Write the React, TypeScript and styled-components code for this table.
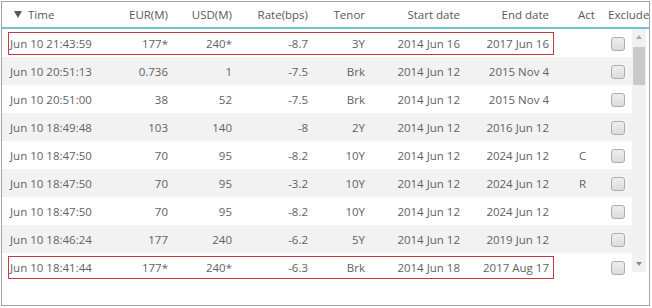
import React from "react";
import styled, { createGlobalStyle } from "styled-components";

const Global = createGlobalStyle`
  html, body { margin: 0; padding: 0; background: #ffffff; }
  body { font-family: "Open Sans", "Liberation Sans", sans-serif; }
`;

const COLS = "109px 54px 64px 76px 57px 95px 89px";

const Frame = styled.div`
  box-sizing: border-box;
  margin: 1px 0 0 1px;
  width: 649px;
  height: 305px;
  border: 1px solid #a3a3a3;
  background: #ffffff;
  color: #626262;
  font-size: 11.5px;
  overflow: hidden;
  display: flex;
  flex-direction: column;
`;

const HeaderRow = styled.div`
  box-sizing: border-box;
  display: flex;
  align-items: flex-start;
  height: 27px;
  padding-top: 1px;
  border-bottom: 2px solid #6ec4d0;
  color: #585858;
  white-space: nowrap;
`;

const Main = styled.div<{ $hl?: boolean }>`
  box-sizing: border-box;
  margin-left: 6px;
  width: 546px;
  height: 23px;
  display: grid;
  grid-template-columns: ${COLS};
  align-items: center;
  border: 1px solid ${(p) => (p.$hl ? "#c23a44" : "transparent")};
`;

const Cell = styled.div<{ $left?: boolean }>`
  text-align: ${(p) => (p.$left ? "left" : "right")};
  padding: ${(p) => (p.$left ? "0 0 0 1px" : "0 4px 0 0")};
  white-space: nowrap;
`;

const SortCell = styled.div`
  display: flex;
  align-items: center;
  gap: 6px;
  padding-left: 5px;
`;

const SortArrow = styled.span`
  width: 0;
  height: 0;
  border-left: 4px solid transparent;
  border-right: 4px solid transparent;
  border-top: 7px solid #5a5a5a;
`;

const ActCell = styled.div`
  box-sizing: border-box;
  width: 46px;
  height: 23px;
  padding-left: 25px;
  display: flex;
  align-items: center;
  white-space: nowrap;
`;

const HeadAct = styled(ActCell)`
  padding-left: 24px;
`;

const HeadExclude = styled.div`
  height: 23px;
  display: flex;
  align-items: center;
  padding-left: 8px;
  white-space: nowrap;
  overflow: hidden;
  flex: 1;
`;

const ExcludeCell = styled.div`
  box-sizing: border-box;
  width: 32px;
  height: 23px;
  padding-left: 11px;
  display: flex;
  align-items: center;
`;

const Check = styled.span`
  box-sizing: border-box;
  width: 14px;
  height: 14px;
  border: 1px solid #adadad;
  border-radius: 3px;
  background: linear-gradient(#eeeeee, #dcdcdc);
`;

const Body = styled.div`
  display: flex;
  align-items: flex-start;
`;

const Rows = styled.div`
  width: 630px;
  display: flex;
  flex-direction: column;
`;

const Row = styled.div<{ $alt: boolean }>`
  box-sizing: border-box;
  height: 28px;
  padding-top: 3px;
  display: flex;
  align-items: flex-start;
  background: ${(p) => (p.$alt ? "#f2f2f2" : "#ffffff")};
`;

const Scrollbar = styled.div`
  width: 14px;
  height: 243px;
  background: #f1f1f1;
  display: flex;
  flex-direction: column;
  align-items: center;
`;

const ArrowBox = styled.div`
  height: 16px;
  width: 100%;
  display: flex;
  align-items: center;
  justify-content: center;
`;

const ArrowUp = styled.span`
  width: 0;
  height: 0;
  border-left: 3.5px solid transparent;
  border-right: 3.5px solid transparent;
  border-bottom: 4px solid #a9a9a9;
`;

const ArrowDown = styled.span`
  width: 0;
  height: 0;
  border-left: 3.5px solid transparent;
  border-right: 3.5px solid transparent;
  border-top: 4px solid #8a8a8a;
`;

const Thumb = styled.div`
  margin-top: 2px;
  width: 12px;
  height: 38px;
  background: #c9c9c9;
`;

const Track = styled.div`
  flex: 1;
`;

type R = {
  time: string;
  eur: string;
  usd: string;
  rate: string;
  tenor: string;
  start: string;
  end: string;
  act?: string;
  hl?: boolean;
};

const data: R[] = [
  { time: "Jun 10 21:43:59", eur: "177*", usd: "240*", rate: "-8.7", tenor: "3Y", start: "2014 Jun 16", end: "2017 Jun 16", hl: true },
  { time: "Jun 10 20:51:13", eur: "0.736", usd: "1", rate: "-7.5", tenor: "Brk", start: "2014 Jun 12", end: "2015 Nov 4" },
  { time: "Jun 10 20:51:00", eur: "38", usd: "52", rate: "-7.5", tenor: "Brk", start: "2014 Jun 12", end: "2015 Nov 4" },
  { time: "Jun 10 18:49:48", eur: "103", usd: "140", rate: "-8", tenor: "2Y", start: "2014 Jun 12", end: "2016 Jun 12" },
  { time: "Jun 10 18:47:50", eur: "70", usd: "95", rate: "-8.2", tenor: "10Y", start: "2014 Jun 12", end: "2024 Jun 12", act: "C" },
  { time: "Jun 10 18:47:50", eur: "70", usd: "95", rate: "-3.2", tenor: "10Y", start: "2014 Jun 12", end: "2024 Jun 12", act: "R" },
  { time: "Jun 10 18:47:50", eur: "70", usd: "95", rate: "-8.2", tenor: "10Y", start: "2014 Jun 12", end: "2024 Jun 12" },
  { time: "Jun 10 18:46:24", eur: "177", usd: "240", rate: "-6.2", tenor: "5Y", start: "2014 Jun 12", end: "2019 Jun 12" },
  { time: "Jun 10 18:41:44", eur: "177*", usd: "240*", rate: "-6.3", tenor: "Brk", start: "2014 Jun 18", end: "2017 Aug 17", hl: true },
];

export default function App() {
  return (
    <>
      <Global />
      <Frame>
        <HeaderRow>
          <Main>
            <SortCell>
              <SortArrow />
              <span>Time</span>
            </SortCell>
            <Cell>EUR(M)</Cell>
            <Cell>USD(M)</Cell>
            <Cell>Rate(bps)</Cell>
            <Cell>Tenor</Cell>
            <Cell>Start date</Cell>
            <Cell>End date</Cell>
          </Main>
          <HeadAct>Act</HeadAct>
          <HeadExclude>Exclude</HeadExclude>
        </HeaderRow>
        <Body>
          <Rows>
            {data.map((r, i) => (
              <Row key={i} $alt={i % 2 === 1}>
                <Main $hl={r.hl}>
                  <Cell $left>{r.time}</Cell>
                  <Cell>{r.eur}</Cell>
                  <Cell>{r.usd}</Cell>
                  <Cell>{r.rate}</Cell>
                  <Cell>{r.tenor}</Cell>
                  <Cell>{r.start}</Cell>
                  <Cell>{r.end}</Cell>
                </Main>
                <ActCell>{r.act ?? ""}</ActCell>
                <ExcludeCell>
                  <Check />
                </ExcludeCell>
              </Row>
            ))}
          </Rows>
          <Scrollbar>
            <ArrowBox>
              <ArrowUp />
            </ArrowBox>
            <Thumb />
            <Track />
            <ArrowBox>
              <ArrowDown />
            </ArrowBox>
          </Scrollbar>
        </Body>
      </Frame>
    </>
  );
}
